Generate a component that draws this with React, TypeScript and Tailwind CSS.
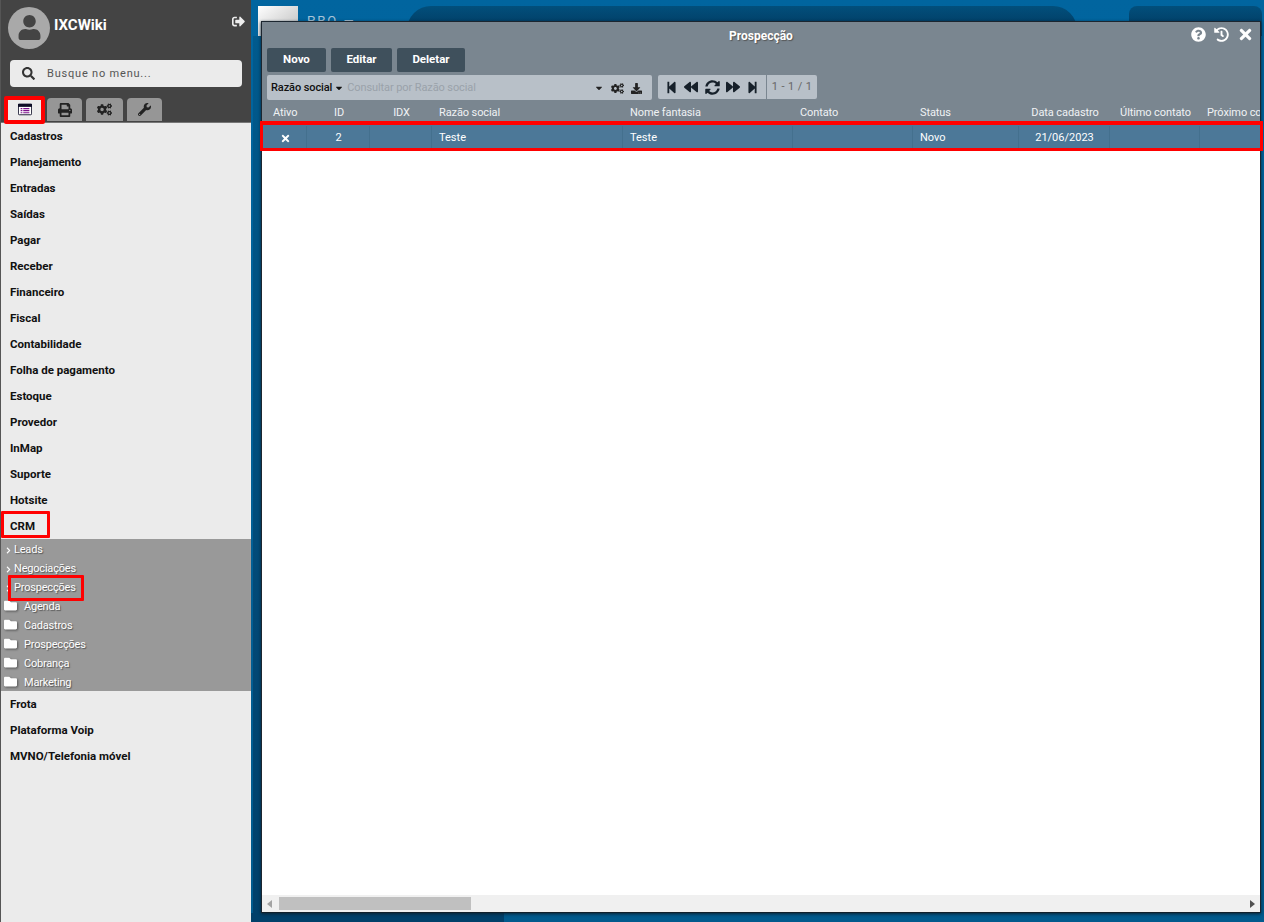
import {
  FaBackward,
  FaCaretDown,
  FaChevronRight,
  FaCogs,
  FaDownload,
  FaFolder,
  FaForward,
  FaHistory,
  FaPrint,
  FaQuestionCircle,
  FaSearch,
  FaSignOutAlt,
  FaStepBackward,
  FaStepForward,
  FaSyncAlt,
  FaTimes,
  FaUser,
  FaWrench,
} from "react-icons/fa";

const topMenu = [
  "Cadastros",
  "Planejamento",
  "Entradas",
  "Saídas",
  "Pagar",
  "Receber",
  "Financeiro",
  "Fiscal",
  "Contabilidade",
  "Folha de pagamento",
  "Estoque",
  "Provedor",
  "InMap",
  "Suporte",
  "Hotsite",
  "CRM",
];
const bottomMenu = ["Frota", "Plataforma Voip", "MVNO/Telefonia móvel"];
const crmLinks = ["Leads", "Negociações", "Prospecções"];
const crmFolders = ["Agenda", "Cadastros", "Prospecções", "Cobrança", "Marketing"];

const columns = [
  { label: "Ativo", width: "w-[45px]", cell: "" },
  { label: "ID", width: "w-[63px]", cell: "2", center: true },
  { label: "IDX", width: "w-[62px]", cell: "", center: true },
  { label: "Razão social", width: "w-[191px]", cell: "Teste" },
  { label: "Nome fantasia", width: "w-[170px]", cell: "Teste" },
  { label: "Contato", width: "w-[120px]", cell: "" },
  { label: "Status", width: "w-[106px]", cell: "Novo" },
  { label: "Data cadastro", width: "w-[91px]", cell: "21/06/2023", center: true },
  { label: "Último contato", width: "w-[90px]", cell: "", center: true },
  { label: "Próximo contato", width: "w-[100px]", cell: "" },
];

function MenuRow({ label }: { label: string }) {
  return (
    <div className="flex h-[26px] items-center pl-[9px] pt-[2px] text-[11.5px] font-bold text-[#111]">
      {label}
    </div>
  );
}

function ListIcon() {
  return (
    <svg viewBox="0 0 16 13" className="h-[13px] w-[14px]">
      <rect x="0.5" y="0.5" width="15" height="12" rx="1" fill="#fff" stroke="#0d0d26" />
      <rect x="0" y="0" width="16" height="3.5" fill="#0d0d26" />
      <path d="M3 5.5h2M6 5.5h7M3 7.8h2M6 7.8h7M3 10.2h2M6 10.2h7" stroke="#7a0f8a" strokeWidth="1.4" />
    </svg>
  );
}

function Sidebar() {
  return (
    <aside className="relative flex w-[251px] shrink-0 flex-col border-l border-[#555] bg-[#ebebeb]">
      <div className="h-[123px] border-b border-[#777] bg-[#444]">
        <div className="flex h-[50px] items-start pl-[7px] pt-[7px]">
          <div className="flex h-[42px] w-[42px] items-end justify-center overflow-hidden rounded-full bg-[#a9a9a9] pb-[9px]">
            <FaUser className="text-[25px] text-[#444]" />
          </div>
          <span className="ml-[4px] mt-[7px] text-[15px] font-bold text-white">IXCWiki</span>
          <FaSignOutAlt className="ml-auto mr-[6px] mt-[8px] text-[13px] text-[#eee]" />
        </div>
        <div className="ml-[9px] mt-[10px] flex h-[27px] w-[232px] items-center rounded-[4px] bg-[#ebebeb] pl-[12px]">
          <FaSearch className="text-[13px] text-[#333]" />
          <span className="ml-[12px] pt-[2px] text-[11px] tracking-[0.8px] text-[#555]">Busque no menu...</span>
        </div>
        <div className="ml-[6px] mt-[11px] flex items-end gap-[4px]">
          <div className="flex h-[23px] w-[36px] items-center justify-center rounded-t-[4px] bg-[#ebebeb]">
            <ListIcon />
          </div>
          <div className="flex h-[23px] w-[35px] items-center justify-center rounded-t-[4px] bg-[#969696]">
            <FaPrint className="text-[14px] text-[#222]" />
          </div>
          <div className="flex h-[23px] w-[37px] items-center justify-center rounded-t-[4px] bg-[#969696]">
            <FaCogs className="text-[15px] text-[#222]" />
          </div>
          <div className="flex h-[23px] w-[35px] items-center justify-center rounded-t-[4px] bg-[#969696]">
            <FaWrench className="text-[13px] text-[#222]" />
          </div>
        </div>
      </div>

      <nav className="flex-1">
        {topMenu.map((item) => (
          <MenuRow key={item} label={item} />
        ))}
        <div className="bg-[#999] text-[11px] tracking-[-0.2px] text-white [text-shadow:1px_1px_1px_#555]">
          {crmLinks.map((item) => (
            <div key={item} className="flex h-[19px] items-center pl-[3px] pt-[3px]">
              <FaChevronRight className="w-[9px] text-[7px]" />
              <span className="ml-[1px]">{item}</span>
            </div>
          ))}
          {crmFolders.map((item) => (
            <div key={item} className="flex h-[19px] items-center pl-[3px]">
              <FaFolder className="w-[13px] text-[13px] drop-shadow-[1px_1px_1px_#555]" />
              <span className="ml-[7px] pt-[3px]">{item}</span>
            </div>
          ))}
        </div>
        {bottomMenu.map((item) => (
          <MenuRow key={item} label={item} />
        ))}
      </nav>

      {/* Destaques vermelhos sobre o menu */}
      <div className="absolute left-[3px] top-[96px] h-[28px] w-[41px] rounded-[2px] border-[4px] border-[#f00]" />
      <div className="absolute left-[0px] top-[511px] h-[27px] w-[49px] rounded-[1px] border-[3px] border-[#f00]" />
      <div className="absolute left-[7px] top-[575px] h-[26px] w-[76px] rounded-[1px] border-[3px] border-[#f00]" />
    </aside>
  );
}

function Toolbar() {
  return (
    <div className="ml-[5px] mt-[4px] flex h-[25px] gap-[6px]">
      <div className="flex h-[25px] w-[385px] items-center rounded-[2px] bg-[#b8c0c8] pl-[4px] pt-[1px] text-[11px] tracking-[-0.1px]">
        <span className="font-medium text-[#111]">Razão social</span>
        <FaCaretDown className="ml-[2px] text-[10px] text-[#111]" />
        <span className="ml-[3px] text-[#9aa2aa]">Consultar por Razão social</span>
        <FaCaretDown className="ml-auto text-[10px] text-[#222]" />
        <FaCogs className="ml-[7px] text-[13px] text-[#222]" />
        <FaDownload className="ml-[7px] mr-[10px] text-[11px] text-[#222]" />
      </div>
      <div className="flex h-[24px] items-center rounded-[2px] bg-[#b8c0c8] text-[#16202a]">
        <div className="flex h-full w-[109px] items-center justify-between border-r border-[#7a8690] px-[7px]">
          <FaStepBackward className="text-[13px]" />
          <FaBackward className="text-[14px]" />
          <FaSyncAlt className="text-[15px]" />
          <FaForward className="text-[14px]" />
          <FaStepForward className="text-[13px]" />
        </div>
        <span className="w-[50px] text-center text-[11px] tracking-[0.4px] text-[#666]">1 - 1 / 1</span>
      </div>
    </div>
  );
}

function ProspectWindow() {
  return (
    <section className="relative ml-[10px] mr-[3px] mt-[21px] flex h-[892px] flex-col border border-[#1c2630] border-b-[#10202c] bg-white shadow-[0_1px_3px_#0b2233]">
      <header className="h-[101px] shrink-0 bg-[#7a8690]">
        <div className="relative h-[25px] pt-[6px] text-center text-[12px] font-bold leading-[16px] text-white [text-shadow:1px_1px_1px_#555]">
          Prospecção
          <div className="absolute right-[6px] top-[4px] flex items-center gap-[8px] text-[15px]">
            <FaQuestionCircle />
            <FaHistory />
            <FaTimes className="text-[17px]" />
          </div>
        </div>
        <div className="ml-[5px] mt-[1px] flex gap-[5px] text-[11.5px] font-bold text-white [text-shadow:1px_1px_1px_#222]">
          <button className="h-[24px] w-[59px] rounded-[2px] bg-[#3f505c]">Novo</button>
          <button className="h-[24px] w-[61px] rounded-[2px] bg-[#3f505c]">Editar</button>
          <button className="h-[24px] w-[68px] rounded-[2px] bg-[#3f505c]">Deletar</button>
        </div>
        <div className="-mt-[1px]">
          <Toolbar />
        </div>
        <div className="mt-[5px] flex overflow-hidden text-[11px] leading-[16px] tracking-[-0.1px] text-[#f0f2f4]">
          {columns.map((col, i) => (
            <div
              key={col.label}
              className={`${col.width} shrink-0 whitespace-nowrap ${col.center ? "pl-[1px] text-center" : i === 0 ? "pl-[11px]" : "pl-[7px]"}`}
            >
              {col.label}
            </div>
          ))}
        </div>
      </header>

      <div className="flex h-[27px] shrink-0 overflow-hidden bg-[#4c7898] pt-[3px] text-[11px] text-white">
        {columns.map((col, i) => (
          <div
            key={col.label}
            className={`${col.width} flex shrink-0 items-center border-r border-[#44708e] ${col.center ? "justify-center pl-[1px]" : "pl-[7px]"}`}
          >
            {i === 0 ? <FaTimes className="ml-[11px] text-[11px]" /> : col.cell}
          </div>
        ))}
      </div>

      <div className="flex-1 bg-white" />

      <div className="flex h-[17px] shrink-0 items-center bg-[#f0f0f0] px-[5px] text-[#555]">
        <span className="h-0 w-0 border-y-[4px] border-r-[5px] border-y-transparent border-r-[#a3a3a3]" />
        <div className="ml-[7px] h-[13px] w-[192px] bg-[#c0c0c0]" />
        <span className="ml-auto h-0 w-0 border-y-[4px] border-l-[5px] border-y-transparent border-l-[#505050]" />
      </div>

      {/* Destaque vermelho sobre a linha selecionada */}
      <div className="absolute left-[-2px] right-[-3px] top-[99px] h-[30px] border-x-[3px] border-b-[3px] border-t-[4px] border-[#f00]" />
    </section>
  );
}

export default function App() {
  return (
    <div className="flex h-[922px] w-[1264px] overflow-hidden font-['Roboto',sans-serif]">
      <Sidebar />
      <main className="relative min-w-0 flex-1 bg-gradient-to-b from-[#01659f] to-[#015a8d]">
        {/* Cabeçalho do sistema atrás da janela */}
        <div className="absolute left-[7px] top-[6px] h-[30px] w-[40px] bg-gradient-to-br from-[#fff] to-[#bbb]" />
        <span className="absolute left-[56px] top-[11px] text-[13px] tracking-[2px] text-[#a8c4d8]">PRO —</span>
        <div className="absolute left-[156px] top-[6px] h-[30px] w-[670px] rounded-t-[24px] bg-gradient-to-b from-[#024f7c] to-[#01365a]" />
        <div className="absolute left-[878px] top-[6px] h-[30px] w-[133px] rounded-t-[8px] bg-gradient-to-b from-[#024f7c] to-[#01365a]" />
        <div className="absolute bottom-0 left-[2px] top-[36px] w-[8px] bg-gradient-to-b from-[#015a8d] to-[#01406a]" />
        <div className="absolute bottom-0 left-0 h-[9px] w-[253px] bg-[#01406a]" />
        <div className="relative">
          <ProspectWindow />
        </div>
      </main>
    </div>
  );
}
